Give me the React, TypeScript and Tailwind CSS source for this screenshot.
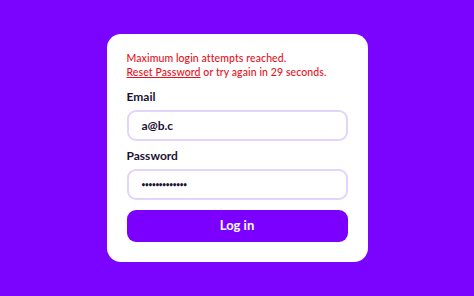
export default function App() {
  return (
    <div
      className="w-[474px] h-[296px] bg-[#7a04ff] flex items-center justify-center"
      style={{ fontFamily: 'Lato, "Noto Sans", sans-serif' }}
    >
      <div className="w-[261px] h-[228px] bg-white rounded-[14px] px-5 pt-[17px]">
        <p className="text-[10.5px] leading-[14px] text-[#e8101c] font-medium tracking-[0.1px]">
          Maximum login attempts reached.
          <br />
          <span className="underline">Reset Password</span> or try again in 29 seconds.
        </p>
        <label className="block mt-[10px] text-[12px] font-bold text-[#1c1233] leading-[16px]">Email</label>
        <div className="mt-[5px] h-[31px] rounded-[9px] border-2 border-[#e2d4fb] flex items-center px-[13px] text-[12px] font-bold text-[#1c1233]">
          a@b.c
        </div>
        <label className="block mt-[7px] text-[12px] font-bold text-[#1c1233] leading-[16px]">Password</label>
        <div className="mt-[5px] h-[31px] rounded-[9px] border-2 border-[#e2d4fb] flex items-center px-[13px] text-[6.5px] font-bold text-[#1c1233] tracking-[-0.3px]">
          •••••••••••••
        </div>
        <button className="mt-[10px] w-full h-[32px] rounded-[9px] bg-[#7c00ff] text-white text-[13px] font-bold">
          Log in
        </button>
      </div>
    </div>
  );
}
